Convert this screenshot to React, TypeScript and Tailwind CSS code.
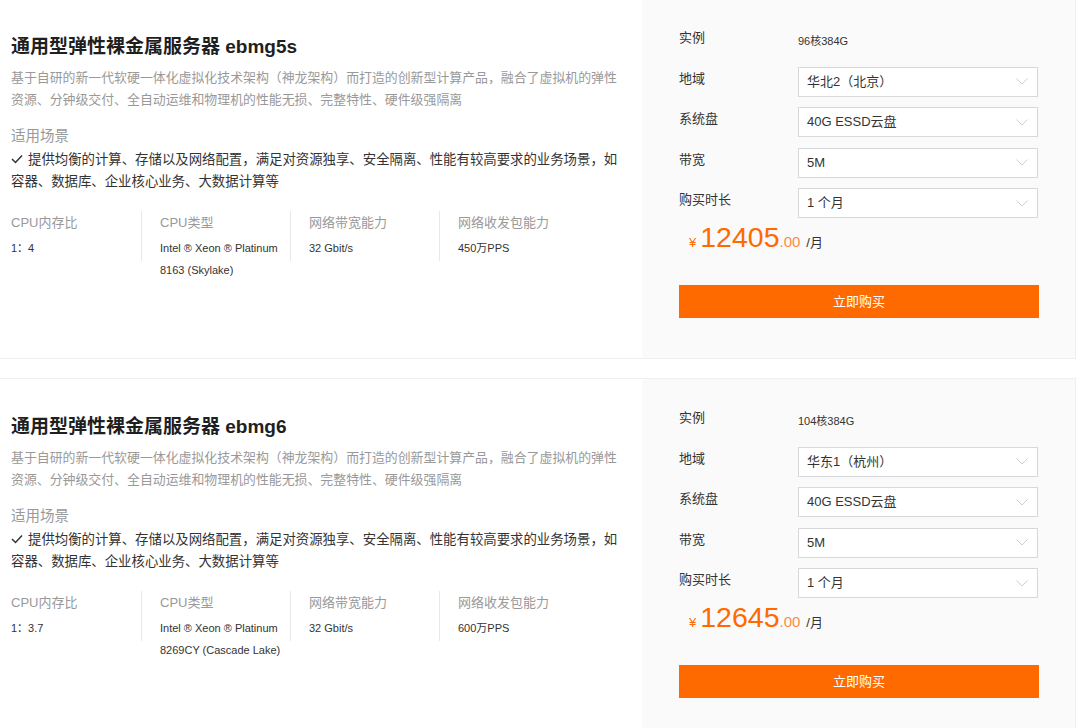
import React from 'react';

type Server = {
  name: string;
  ratio: string;
  cpu: string;
  bandwidth: string;
  pps: string;
  instance: string;
  region: string;
  price: string;
};

const servers: Server[] = [
  {
    name: '通用型弹性裸金属服务器 ebmg5s',
    ratio: '1：4',
    cpu: 'Intel ® Xeon ® Platinum 8163 (Skylake)',
    bandwidth: '32 Gbit/s',
    pps: '450万PPS',
    instance: '96核384G',
    region: '华北2（北京）',
    price: '12405',
  },
  {
    name: '通用型弹性裸金属服务器 ebmg6',
    ratio: '1：3.7',
    cpu: 'Intel ® Xeon ® Platinum 8269CY (Cascade Lake)',
    bandwidth: '32 Gbit/s',
    pps: '600万PPS',
    instance: '104核384G',
    region: '华东1（杭州）',
    price: '12645',
  },
];

const Chevron = () => (
  <svg width="12" height="7" viewBox="0 0 12 7" fill="none">
    <polyline points="0.5,0.5 6,6 11.5,0.5" stroke="#cfcfcf" strokeWidth="1" />
  </svg>
);

const Check = () => (
  <svg width="12" height="10" viewBox="0 0 12 10" fill="none" className="inline-block mr-[5px] mb-[2px]">
    <polyline points="1,5 4.5,8.5 11,1.5" stroke="#333" strokeWidth="1.5" />
  </svg>
);

const Select = ({ value }: { value: string }) => (
  <div className="w-[240px] h-[30px] border border-[#d7d8dc] bg-white flex items-center justify-between pl-[8px] pr-[9px] text-[13px] text-[#333]">
    <span>{value}</span>
    <Chevron />
  </div>
);

const FormRow = ({ label, children }: { label: string; children: React.ReactNode }) => (
  <div className="flex items-start h-[30px]">
    <div className="w-[119px] pt-[2px] text-[13px] leading-[20px] text-[#333]">{label}</div>
    {children}
  </div>
);

const Spec = ({ label, value, last }: { label: string; value: string; last?: boolean }) => (
  <div className="flex w-[149px]">
    <div className="w-[130px]">
      <div className="text-[13px] leading-[20px] text-[#999]">{label}</div>
      <div className="mt-[4px] text-[11px] leading-[22px] text-[#333]">{value}</div>
    </div>
    {!last && <div className="w-px h-[50px] -mt-[2px] bg-[#e8e8e8]" />}
  </div>
);

const ServerCard = ({ s }: { s: Server }) => (
  <div className="flex w-[1076px] h-[361px] bg-white border-y border-r border-[#efefef]">
    <div className="w-[642px] pl-[11px] pt-[34px]">
      <h2 className="text-[19px] leading-[28px] font-bold text-[#1f1f1f]">{s.name}</h2>
      <div className="w-[609px]">
        <p className="mt-[6px] text-[12.9px] leading-[22px] text-[#999]">
          基于自研的新一代软硬一体化虚拟化技术架构（神龙架构）而打造的创新型计算产品，融合了虚拟机的弹性资源、分钟级交付、全自动运维和物理机的性能无损、完整特性、硬件级强隔离
        </p>
        <div className="mt-[14px] text-[14.5px] leading-[22px] text-[#999]">适用场景</div>
        <p className="mt-[2px] text-[13.4px] leading-[22px] text-[#333]">
          <Check />
          提供均衡的计算、存储以及网络配置，满足对资源独享、安全隔离、性能有较高要求的业务场景，如容器、数据库、企业核心业务、大数据计算等
        </p>
      </div>
      <div className="flex mt-[20px]">
        <Spec label="CPU内存比" value={s.ratio} />
        <Spec label="CPU类型" value={s.cpu} />
        <Spec label="网络带宽能力" value={s.bandwidth} />
        <Spec label="网络收发包能力" value={s.pps} last />
      </div>
    </div>
    <div className="w-[433px] bg-[#fafafa] pt-[27px] pl-[37px] pr-[37px]">
      <div className="flex flex-col gap-[10.5px]">
        <FormRow label="实例">
          <div className="self-center text-[11px] text-[#333]">{s.instance}</div>
        </FormRow>
        <FormRow label="地域">
          <Select value={s.region} />
        </FormRow>
        <FormRow label="系统盘">
          <Select value="40G ESSD云盘" />
        </FormRow>
        <FormRow label="带宽">
          <Select value="5M" />
        </FormRow>
        <FormRow label="购买时长">
          <Select value="1 个月" />
        </FormRow>
      </div>
      <div className="flex items-baseline ml-[10px] mt-[2px] leading-[34px] text-[#ff6a00]">
        <span className="text-[13px] mr-[4px]">¥</span>
        <span className="text-[28.5px]">{s.price}</span>
        <span className="text-[15px] text-[#ff8a40]">.00</span>
        <span className="ml-[6px] text-[13px] text-[#333]">/月</span>
      </div>
      <button className="mt-[25px] w-[360px] h-[33px] bg-[#ff6a00] text-white text-[13px] flex items-center justify-center">
        立即购买
      </button>
    </div>
  </div>
);

export default function App() {
  return (
    <div
      className="w-[1080px] h-[728px] overflow-hidden bg-white"
      style={{ fontFamily: '"Liberation Sans", "Noto Sans CJK SC", sans-serif' }}
    >
      <div className="flex flex-col gap-[19px] -mt-[2px]">
        {servers.map((s) => (
          <ServerCard key={s.name} s={s} />
        ))}
      </div>
    </div>
  );
}
